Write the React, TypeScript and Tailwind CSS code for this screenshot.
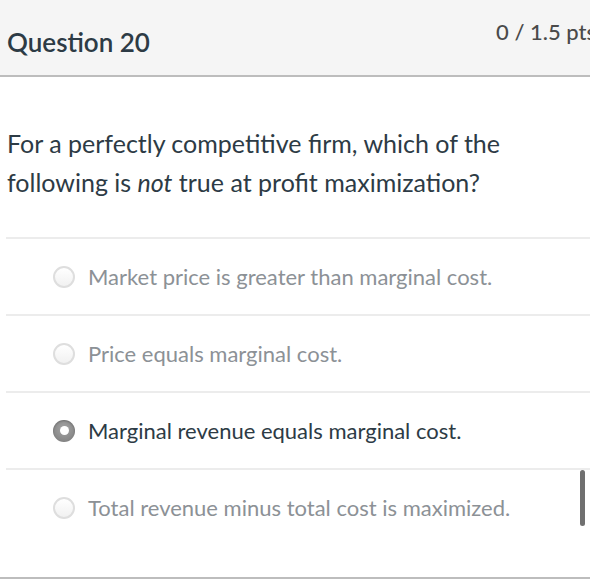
import React from 'react';

const answers = [
  { text: 'Market price is greater than marginal cost.', selected: false },
  { text: 'Price equals marginal cost.', selected: false },
  { text: 'Marginal revenue equals marginal cost.', selected: true },
  { text: 'Total revenue minus total cost is maximized.', selected: false },
];

const Radio = ({ checked }: { checked: boolean }) =>
  checked ? (
    <span className="w-[22px] h-[22px] shrink-0 rounded-full bg-[radial-gradient(circle_at_50%_40%,#a5a5a5,#7a7a7a)] flex items-center justify-center shadow-[inset_0_1px_2px_rgba(0,0,0,0.25)]">
      <span className="w-[9px] h-[9px] rounded-full bg-white" />
    </span>
  ) : (
    <span className="w-[22px] h-[22px] shrink-0 rounded-full border-2 border-[#dedede] bg-[linear-gradient(#ffffff,#f1f1f1)]" />
  );

export default function App() {
  return (
    <div className="relative w-[590px] h-[581px] overflow-hidden bg-white font-['Lato','Noto_Sans',sans-serif] text-[#2d3b45]">
      <div className="h-[77px] bg-[#f5f5f5] border-b-2 border-[#bdbdbd] flex items-start pl-[7px]">
        <h2 className="mt-[24px] text-[26px] leading-[36px] font-semibold">Question 20</h2>
        <div className="ml-auto mr-[-6px] mt-[15px] whitespace-nowrap text-[22px] font-medium text-[#4a4a4a]">0 / 1.5 pts</div>
      </div>

      <p className="ml-[7px] mt-[47px] mb-[35px] text-[25px] leading-[39px] pr-2">
        For a perfectly competitive firm, which of the
        <br />
        following is <em>not</em> true at profit maximization?
      </p>

      <div className="ml-[6px]">
        {answers.map((a) => (
          <div key={a.text} className="h-[77px] border-t-2 border-[#ececec] flex items-center pl-[47px] gap-[13px]">
            <Radio checked={a.selected} />
            <span className={`text-[22px] ${a.selected ? 'text-[#2d3b45]' : 'text-[#8c9196]'}`}>{a.text}</span>
          </div>
        ))}
      </div>

      <div className="absolute left-0 right-0 bottom-[2px] h-[2px] bg-[#bdbdbd]" />
      <div className="absolute left-[580px] top-[470px] w-[5px] h-[56px] rounded-full bg-[#707070]" />
    </div>
  );
}
